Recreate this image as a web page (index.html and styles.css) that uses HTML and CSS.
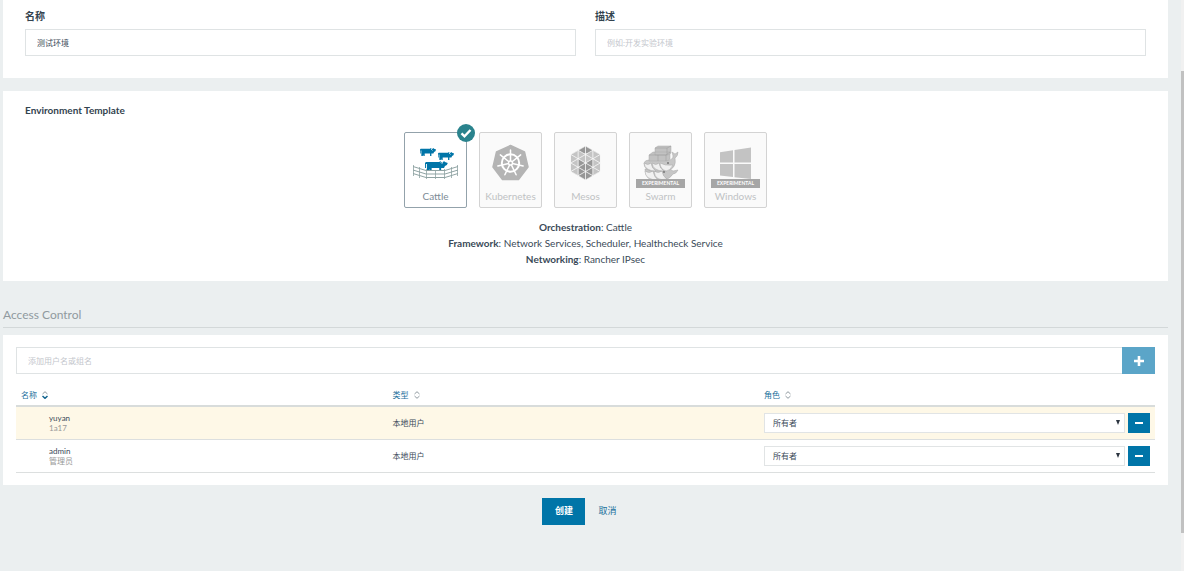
FILE: index.html
```html
<!DOCTYPE html>
<html lang="zh-CN">
<head>
<meta charset="utf-8">
<title>Environment</title>
<link rel="stylesheet" href="styles.css">
</head>
<body>
<main class="page">
  <section class="panel fields">
    <div class="field">
      <label class="label" for="name">名称</label>
      <input class="input" id="name" type="text" value="测试环境">
    </div>
    <div class="field">
      <label class="label" for="desc">描述</label>
      <input class="input" id="desc" type="text" placeholder="例如:开发实验环境">
    </div>
  </section>

  <section class="panel template">
    <h2 class="label">Environment Template</h2>
    <div class="cards">
      <button class="card card-active" type="button">
        <svg class="logo" viewBox="0 0 61 50" aria-hidden="true">
          <defs>
            <path id="cow" d="M1 1H15L16 0L17 1H19L20 0L21 1L24 2L23 4L21 5L20 7H17V10H15V7H7V10H5V8L4 10H2V3H1V7H0V2Z"/>
          </defs>
          <g fill="#0075a8">
            <use href="#cow" transform="translate(15 15) scale(.67 .8)"/>
            <use href="#cow" transform="translate(33 19) scale(.67 .8)"/>
            <use href="#cow" transform="translate(20 28) scale(.95 1)"/>
          </g>
          <g fill="none" stroke="#8fa3a3">
            <path stroke-width=".8" d="M8.500 32V43M14.500 34V45M21.500 36V46M30.500 37V46M39.500 36V46M46.500 34V45M52.500 32V43"/>
            <path d="M8 33.500L21 37.500H40L53 33.500M8 37L21 41H40L53 37M8 40.500L21 44.500H40L53 40.500"/>
          </g>
          <path d="M35 28.500l2 2 1-2M26 16l1.500 1.500M44 20l1.500 1.500" fill="none" stroke="#fff" stroke-width=".7"/>
        </svg>
        <span class="card-name">Cattle</span>
        <svg class="check" viewBox="0 0 18 18" aria-hidden="true">
          <circle cx="9" cy="9" r="9" fill="#2a838d"/>
          <path d="M4.500 9.300l3 3 6-6.300" fill="none" stroke="#fff" stroke-width="2.400"/>
        </svg>
      </button>
      <button class="card" type="button">
        <svg class="logo" viewBox="0 0 61 50" aria-hidden="true">
          <path d="M30.500 12.500L44.500 19L48 34L38.500 46.500H22.500L13 34L16.500 19Z" fill="#b4b4b4" stroke="#b4b4b4" stroke-width="1.500" stroke-linejoin="round"/>
          <g transform="translate(30.500 30)" fill="none" stroke="#fff" stroke-width="1.500" stroke-linecap="round">
            <circle r="8.700" stroke-width="2"/>
            <path id="spoke" d="M0-2V-13"/>
            <use href="#spoke" transform="rotate(51.400)"/>
            <use href="#spoke" transform="rotate(102.900)"/>
            <use href="#spoke" transform="rotate(154.300)"/>
            <use href="#spoke" transform="rotate(205.700)"/>
            <use href="#spoke" transform="rotate(257.100)"/>
            <use href="#spoke" transform="rotate(308.600)"/>
            <circle r="2" fill="#b4b4b4"/>
          </g>
        </svg>
        <span class="card-name">Kubernetes</span>
      </button>
      <button class="card" type="button">
        <svg class="logo" viewBox="0 0 61 50" aria-hidden="true">
          <clipPath id="hex"><path d="M0-17L14.700-8.500V8.500L0 17L-14.700 8.500V-8.500Z"/></clipPath>
          <g transform="translate(30.500 30)" clip-path="url(#hex)">
            <path d="M-15-17H15V17H-15Z" fill="#c4c4c4"/>
            <path d="M0-17L7.350-12.750L3-10H-3L-7.350-12.750ZM-7.350-4.250L0 0L7.350-4.250V12.750L0 17L-7.350 12.750Z" fill="#979797"/>
            <path d="M0-17V17M7.350-17V17M-7.350-17V17M-15-8.670L15 8.670M-15-17.170L15 .170M-15-.170L15 17.170M-15 8.330L15 25.670M-15-25.670L15-8.330M-15 8.670L15-8.670M-15 .170L15-17.170M-15 17.170L15-.170M-15-8.330L15-25.670M-15 25.670L15 8.330" fill="none" stroke="#fafafa" stroke-width=".8"/>
          </g>
        </svg>
        <span class="card-name">Mesos</span>
      </button>
      <button class="card" type="button">
        <svg class="logo" viewBox="0 0 61 50" aria-hidden="true">
          <g stroke="#a9a9a9" stroke-width=".5" stroke-linejoin="round">
            <path d="M15 36H40L43 38L48 37Q46 41 43 41Q40 46 34 47H23Q15 46 15 36Z" fill="#c6c6c6"/>
            <path d="M15 38Q19 41 23 38Q24 44 28 47Q15 47 15 38ZM24 38Q28 41 32 38Q33 44 37 46Q25 49 24 38Z" fill="#f0f0f0"/>
            <path d="M14 30Q15 27 19 27H38Q43 27 43 23L42 19L45 21L48 19Q48 23 45 25Q47 36 36 38H22Q14 37 14 30Z" fill="#c6c6c6"/>
            <path d="M14 30Q18 33 21 30Q22 36 26 38Q15 38 14 30ZM22 30Q26 33 29 30Q30 36 34 38Q23 38 22 30ZM30 30Q35 33 43 32Q40 38 36 38Q30 36 30 30Z" fill="#f0f0f0"/>
            <path d="M19 22L23 19H40V26L37 28H19ZM25 15L28 13H41V20L38 22H25Z" fill="#c2c2c2"/>
            <path d="M19 22H36V28M28 22V28M36 22L40 19M25 15H37V22M37 15L41 13" fill="none" stroke="#999"/>
          </g>
          <circle cx="38" cy="30" r="1" fill="#777"/><circle cx="34" cy="39" r="1" fill="#777"/>
        </svg>
        <span class="banner">EXPERIMENTAL</span>
        <span class="card-name">Swarm</span>
      </button>
      <button class="card" type="button">
        <svg class="logo" viewBox="0 0 61 50" aria-hidden="true">
          <path d="M15 19.300L28 17.200V29.500H15ZM29.500 17L46 14.500V29.500H29.500ZM15 31H28V44L15 42.500ZM29.500 31H46V46L29.500 44.200Z" fill="#c3c3c3"/>
        </svg>
        <span class="banner">EXPERIMENTAL</span>
        <span class="card-name">Windows</span>
      </button>
    </div>
    <div class="summary">
      <div><b>Orchestration</b>: Cattle</div>
      <div><b>Framework</b>: Network Services, Scheduler, Healthcheck Service</div>
      <div><b>Networking</b>: Rancher IPsec</div>
    </div>
  </section>

  <h1 class="heading">Access Control</h1>

  <section class="panel access">
    <div class="search">
      <input class="input" type="text" placeholder="添加用户名或组名" aria-label="添加用户名或组名">
      <button class="add" type="button" aria-label="添加">
        <svg width="10" height="10" viewBox="0 0 10 10"><path d="M5 0V10M0 5H10" stroke="#fff" stroke-width="2.600"/></svg>
      </button>
    </div>
    <table class="members">
      <thead>
        <tr>
          <th><a href="#">名称 <svg class="sort sort-on" viewBox="0 0 6 8"><path d="M.500 3L3 .700L5.500 3"/><path class="down" d="M.500 5L3 7.300L5.500 5"/></svg></a></th>
          <th><a href="#">类型 <svg class="sort" viewBox="0 0 6 8"><path d="M.500 3L3 .700L5.500 3M.500 5L3 7.300L5.500 5"/></svg></a></th>
          <th class="col-role"><a href="#">角色 <svg class="sort" viewBox="0 0 6 8"><path d="M.500 3L3 .700L5.500 3M.500 5L3 7.300L5.500 5"/></svg></a></th>
        </tr>
      </thead>
      <tbody>
        <tr class="row-new">
          <td class="who">yuyan<small>1a17</small></td>
          <td>本地用户</td>
          <td>
            <div class="role">
              <div class="select-box"><select aria-label="yuyan 角色"><option>所有者</option></select></div>
              <button class="remove" type="button" aria-label="移除 yuyan"></button>
            </div>
          </td>
        </tr>
        <tr>
          <td class="who">admin<small>管理员</small></td>
          <td>本地用户</td>
          <td>
            <div class="role">
              <div class="select-box"><select aria-label="admin 角色"><option>所有者</option></select></div>
              <button class="remove" type="button" aria-label="移除 admin"></button>
            </div>
          </td>
        </tr>
      </tbody>
    </table>
  </section>

  <div class="actions">
    <button class="create" type="button">创建</button>
    <a class="cancel" href="#">取消</a>
  </div>
</main>
<div class="scrollbar"><div class="thumb"></div></div>
</body>
</html>
```
FILE: styles.css
```css
* { box-sizing: border-box; }

body {
  margin: 0;
  min-height: 100vh;
  display: flex;
  background: #ebeff0;
  color: #3a4a58;
  font: 8px/10px Lato, "Noto Sans CJK SC", sans-serif;
}

button, input, select { font: inherit; color: inherit; margin: 0; border-radius: 0; }
button { border: 0; padding: 0; cursor: pointer; }
a { color: #1a6f9c; text-decoration: none; }

.page { flex: 1; min-width: 0; padding: 0 13px 0 3px; }
.panel { background: #fff; }

.fields {
  display: grid;
  grid-template-columns: 1fr 1fr;
  gap: 19px;
  padding: 9px 22px 22px;
}
.label {
  display: block;
  margin: 0;
  font-size: 10px;
  line-height: 14px;
  font-weight: 700;
  color: #33434f;
}
.input {
  display: block;
  width: 100%;
  height: 27px;
  padding: 0 11px;
  border: 1px solid #dfe3e4;
  background: #fff;
  outline: 0;
}
.input::placeholder { color: #c3c6cc; opacity: 1; }
.field .input { margin-top: 6px; }

.template { margin-top: 13px; padding: 12px 22px 14px; }
.cards { display: flex; justify-content: center; gap: 12px; margin-top: 15px; }
.card {
  position: relative;
  width: 63px;
  height: 76px;
  display: flex;
  flex-direction: column;
  border: 1px solid #d3d3d3;
  border-radius: 2px;
  background: #fafafa;
  color: #bfc2c4;
}
.card-active { border-color: #93a2ab; background: #fff; color: #7d8c96; }
.logo { display: block; width: 61px; height: 50px; }
.card-name { margin-top: 6px; width: 100%; font-size: 10px; line-height: 14px; text-align: center; }
.banner {
  position: absolute;
  top: 46px;
  left: 6px;
  right: 6px;
  background: #a6a6a6;
  color: #fff;
  font-size: 5px;
  line-height: 9px;
  font-weight: 700;
  text-align: center;
}
.check { position: absolute; top: -9px; right: -9px; width: 18px; height: 18px; }
.summary { margin-top: 11px; font-size: 10px; line-height: 16px; text-align: center; }

.heading {
  margin: 24px 0 7px;
  padding-bottom: 2px;
  border-bottom: 1px solid #d3d8d9;
  font-size: 12px;
  line-height: 20px;
  font-weight: 400;
  color: #909a9f;
}

.access { padding: 12px 13px; }
.search { display: flex; }
.search .input { flex: 1; border-right: 0; }
.add {
  width: 33px;
  display: flex;
  align-items: center;
  justify-content: center;
  background: #5ba5c8;
}
.members { width: 100%; margin-top: 10px; border-collapse: collapse; table-layout: fixed; }
.members th {
  height: 22px;
  padding: 0 5px;
  font-weight: 400;
  text-align: left;
  border-bottom: 2px solid #d8dcdb;
}
.col-role { width: 396px; }
.members td { height: 33px; padding: 0 5px; border-bottom: 1px solid #dcdfdf; }
.members .who { padding-left: 33px; }
.who small { display: block; font-size: 8px; color: #999; }
.row-new { background: #fef8e7; }
.sort {
  width: 6px;
  height: 8px;
  margin-left: 3px;
  vertical-align: -1px;
  fill: none;
  stroke: #8f999f;
}
.sort-on .down { stroke: #14658f; stroke-width: 1.5; }

.role { display: flex; gap: 3px; }
.select-box { position: relative; flex: 1; height: 20px; }
.select-box select {
  display: block;
  width: 100%;
  height: 100%;
  padding: 0 8px;
  appearance: none;
  border: 1px solid #e1e4e5;
  background: #fff;
}
.select-box::after {
  content: "";
  position: absolute;
  top: 7px;
  right: 5px;
  border: 2px solid transparent;
  border-top: 5px solid #2c3540;
  border-bottom: 0;
}
.remove {
  width: 22px;
  height: 20px;
  display: flex;
  align-items: center;
  justify-content: center;
  background: #0075a8;
}
.remove::before { content: ""; width: 8px; height: 2px; background: #fff; }

.actions { display: flex; align-items: center; justify-content: center; gap: 13px; margin-top: 13px; padding-right: 12px; }
.create { width: 43px; height: 27px; background: #0075a8; color: #fff; font-size: 9px; font-weight: 700; }
.cancel { font-size: 9px; }

.scrollbar { width: 3px; padding-top: 71px; background: #f1f1f1; }
.thumb { height: 462px; background: #c1c1c1; }
```
